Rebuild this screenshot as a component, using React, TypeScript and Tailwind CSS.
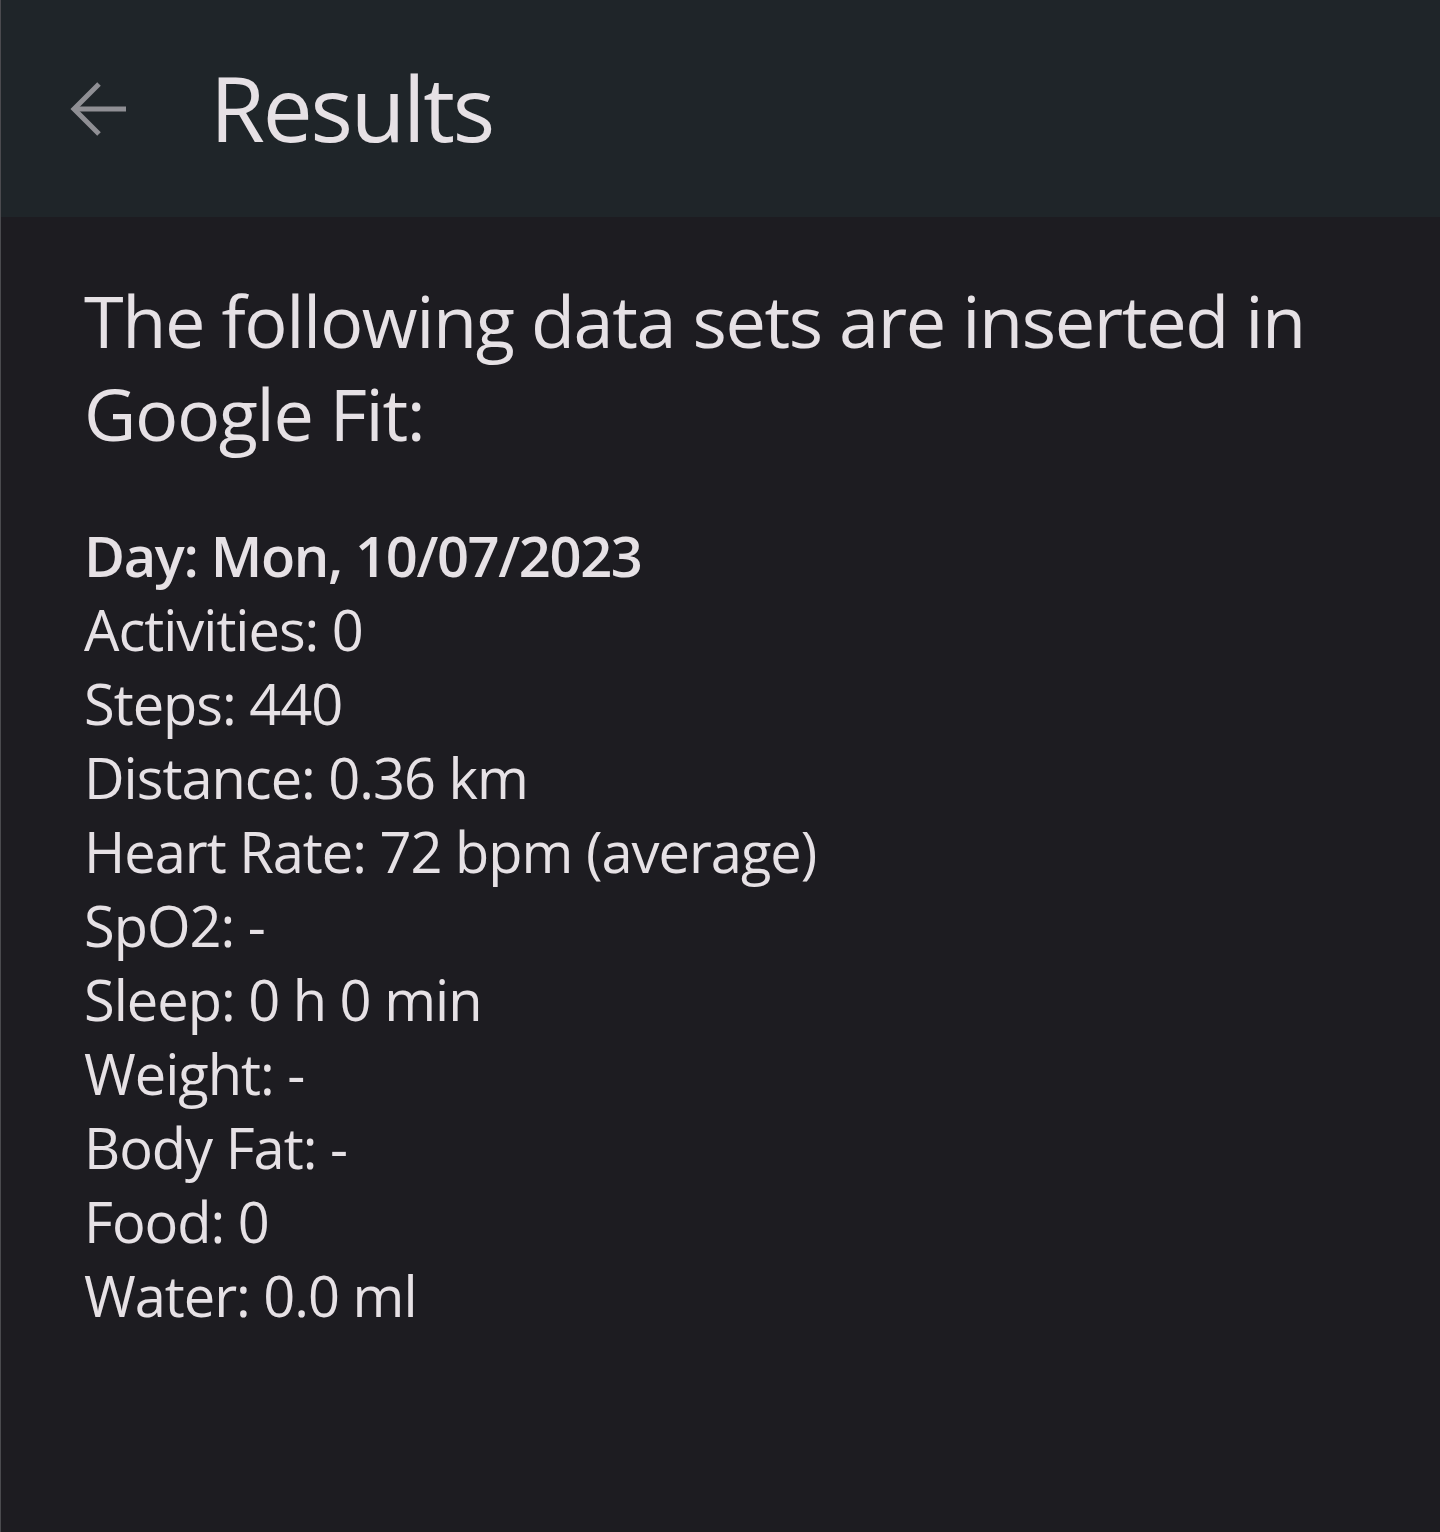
import React from 'react';

const rows = [
  'Activities: 0',
  'Steps: 440',
  'Distance: 0.36 km',
  'Heart Rate: 72 bpm (average)',
  'SpO2: -',
  'Sleep: 0 h 0 min',
  'Weight: -',
  'Body Fat: -',
  'Food: 0',
  'Water: 0.0 ml',
];

const App: React.FC = () => {
  return (
    <div
      className="min-h-[1532px] w-[1440px] bg-[#1d1c21] border-l border-[#4a4a4e] text-[#e6e1e5]"
      style={{ fontFamily: '"Open Sans", "Noto Sans", sans-serif' }}
    >
      <header className="h-[217px] bg-[#1f2529] flex items-center">
        <button className="ml-[69px] w-[58px] h-[58px] flex items-center justify-center text-[#8f8f94]">
          <svg width="58" height="58" viewBox="0 0 58 58" fill="none">
            <path d="M56 29H6" stroke="currentColor" strokeWidth="5" />
            <path d="M29 4L4 29L29 54" stroke="currentColor" strokeWidth="5" />
          </svg>
        </button>
        <h1 className="ml-[82px] text-[89px] leading-none pb-[2px] tracking-[-0.025em]">Results</h1>
      </header>

      <main className="pl-[83px] pr-[60px] pt-[57px]">
        <p className="text-[72px] leading-[93px] tracking-[-0.019em]">
          The following data sets are inserted in Google Fit:
        </p>
        <div className="mt-[58px] text-[56px] leading-[74px] tracking-[-0.018em]">
          <p className="font-semibold tracking-[-0.024em]">Day: Mon, 10/07/2023</p>
          {rows.map((r) => (
            <p key={r}>{r}</p>
          ))}
        </div>
      </main>
    </div>
  );
};

export default App;
